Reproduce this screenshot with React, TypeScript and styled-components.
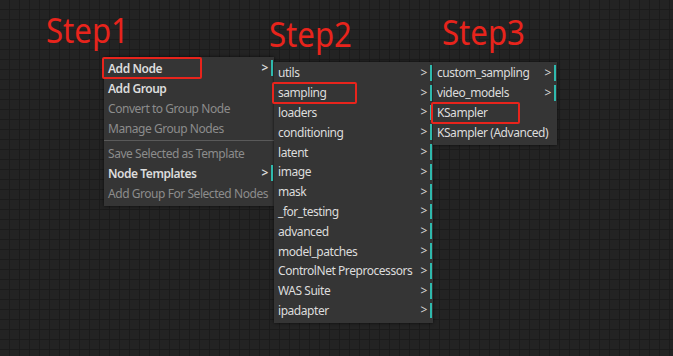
import React from "react";
import styled, { createGlobalStyle } from "styled-components";

const Global = createGlobalStyle`
  html, body { margin: 0; padding: 0; background: #222; }
  body { width: 673px; height: 356px; overflow: hidden; }
`;

const Canvas = styled.div`
  position: relative;
  width: 673px;
  height: 356px;
  overflow: hidden;
  background-color: #232323;
  background-image:
    linear-gradient(to right, #1b1b1b 1px, transparent 1px),
    linear-gradient(to bottom, #1b1b1b 1px, transparent 1px);
  background-size: 10px 10px;
  background-position: 9px 9px;
  font-family: "Noto Sans", "Liberation Sans", sans-serif;
`;

const StepLabel = styled.div<{ $x: number; $y: number }>`
  position: absolute;
  left: ${(p) => p.$x}px;
  top: ${(p) => p.$y}px;
  color: #e8241c;
  font-family: "Noto Sans", sans-serif;
  font-size: 35px;
  line-height: 1;
  transform: scaleX(0.89);
  transform-origin: left top;
`;

const Cascade = styled.div`
  position: absolute;
  left: 104px;
  top: 57px;
  display: flex;
  align-items: flex-start;
`;

const Menu = styled.div<{ $w: number; $drop?: number }>`
  width: ${(p) => p.$w}px;
  margin-top: ${(p) => p.$drop ?? 0}px;
  background: #353535;
  box-shadow: 0 0 3px rgba(0, 0, 0, 0.7);
  padding: 1px 0 3px;
  display: flex;
  flex-direction: column;
`;

const Item = styled.div<{ $disabled?: boolean; $bold?: boolean; $h?: number; $mark?: number }>`
  position: relative;
  height: ${(p) => p.$h ?? 19.8}px;
  display: flex;
  align-items: center;
  padding-left: 4px;
  font-size: 12px;
  letter-spacing: -0.45px;
  white-space: nowrap;
  color: ${(p) => (p.$disabled ? "#8c8c8c" : "#dcdcdc")};
  font-weight: ${(p) => (p.$bold ? 600 : 400)};

  &::after {
    content: "";
    display: ${(p) => (p.$mark ? "block" : "none")};
    position: absolute;
    left: -2px;
    top: -1px;
    width: ${(p) => p.$mark ?? 0}px;
    height: 22px;
    border: 2px solid #e8241c;
    border-radius: 2px;
    box-sizing: border-box;
  }
`;

const Arrow = styled.span`
  position: absolute;
  right: 6px;
  top: 50%;
  transform: translateY(-55%);
  color: #d8d8d8;
  font-size: 12px;
`;

const Bar = styled.span`
  position: absolute;
  right: 1px;
  top: 2px;
  bottom: 2px;
  width: 2px;
  background: #2fb9ad;
`;

const Separator = styled.div`
  height: 1px;
  background: #5a5a5a;
  margin: 2px 0 2px;
`;

type Entry = {
  label: string;
  sub?: boolean;
  disabled?: boolean;
  bold?: boolean;
  sep?: boolean;
  mark?: number;
};

const menu1: Entry[] = [
  { label: "Add Node", sub: true, bold: true, mark: 100 },
  { label: "Add Group", bold: true },
  { label: "Convert to Group Node", disabled: true },
  { label: "Manage Group Nodes", disabled: true },
  { label: "", sep: true },
  { label: "Save Selected as Template", disabled: true },
  { label: "Node Templates", sub: true, bold: true },
  { label: "Add Group For Selected Nodes", disabled: true },
];

const menu2: Entry[] = [
  "utils",
  "sampling",
  "loaders",
  "conditioning",
  "latent",
  "image",
  "mask",
  "_for_testing",
  "advanced",
  "model_patches",
  "ControlNet Preprocessors",
  "WAS Suite",
  "ipadapter",
].map((label) => ({ label, sub: true, mark: label === "sampling" ? 85 : undefined }));

const menu3: Entry[] = [
  { label: "custom_sampling", sub: true },
  { label: "video_models", sub: true },
  { label: "KSampler", mark: 89 },
  { label: "KSampler (Advanced)" },
];

function MenuList({ entries, h }: { entries: Entry[]; h?: number }) {
  return (
    <>
      {entries.map((e, i) =>
        e.sep ? (
          <Separator key={i} />
        ) : (
          <Item key={i} $disabled={e.disabled} $bold={e.bold} $h={h} $mark={e.mark}>
            {e.label}
            {e.sub && (
              <>
                <Arrow>&gt;</Arrow>
                <Bar />
              </>
            )}
          </Item>
        )
      )}
    </>
  );
}

export default function App() {
  return (
    <>
      <Global />
      <Canvas>
        <StepLabel $x={46} $y={12}>Step1</StepLabel>
        <StepLabel $x={269} $y={16}>Step2</StepLabel>
        <StepLabel $x={442} $y={14}>Step3</StepLabel>

        <Cascade>
          <Menu $w={170}>
            <MenuList entries={menu1} h={20} />
          </Menu>
          <Menu $w={159} $drop={5}>
            <MenuList entries={menu2} />
          </Menu>
          <Menu $w={124} $drop={5}>
            <MenuList entries={menu3} />
          </Menu>
        </Cascade>
      </Canvas>
    </>
  );
}
